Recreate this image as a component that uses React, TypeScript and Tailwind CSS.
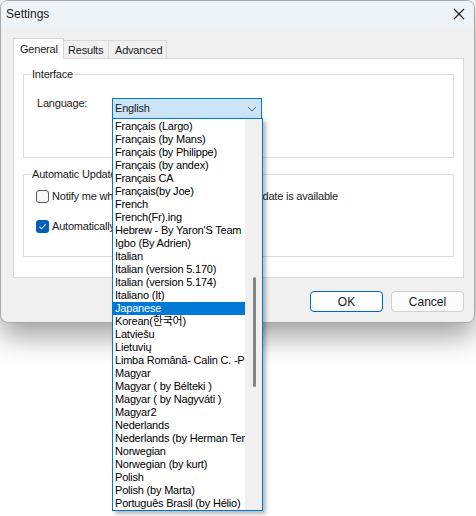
import React from "react";

const languages = [
  "Français (Largo)",
  "Français (by Mans)",
  "Français (by Philippe)",
  "Français (by andex)",
  "Français CA",
  "Français(by Joe)",
  "French",
  "French(Fr).ing",
  "Hebrew - By Yaron'S Team",
  "Igbo (By Adrien)",
  "Italian",
  "Italian (version 5.170)",
  "Italian (version 5.174)",
  "Italiano (It)",
  "Japanese",
  "Korean(한국어)",
  "Latviešu",
  "Lietuvių",
  "Limba Română- Calin C. -Piatra Neamt",
  "Magyar",
  "Magyar ( by Bélteki )",
  "Magyar ( by Nagyváti )",
  "Magyar2",
  "Nederlands",
  "Nederlands (by Herman Termaat)",
  "Norwegian",
  "Norwegian (by kurt)",
  "Polish",
  "Polish (by Marta)",
  "Português Brasil (by Hélio)",
];

const font =
  "font-['Liberation_Sans','Noto_Sans_CJK_KR',Arial,sans-serif] text-[11px] tracking-[-0.2px]";

function Checkbox({ checked }: { checked?: boolean }) {
  if (checked) {
    return (
      <span className="w-[13px] h-[13px] rounded-[3px] bg-[#005fb8] flex items-center justify-center shrink-0">
        <svg width="9" height="9" viewBox="0 0 9 9">
          <path d="M1.5 4.8 L3.6 6.8 L7.6 2.3" fill="none" stroke="#ffffff" strokeWidth="1.1" />
        </svg>
      </span>
    );
  }
  return <span className="w-[13px] h-[13px] rounded-[3px] border border-[#5d5d5d] bg-[#f6f6f6] shrink-0" />;
}

export default function App() {
  return (
    <div className={`relative w-[476px] h-[516px] bg-white overflow-hidden text-[#1a1a1a] ${font}`}>
      {/* Window */}
      <div className="w-[475px] h-[323px] rounded-[8px] border border-[#a9a9a9] bg-[#f0f0f0] shadow-[0_12px_30px_rgba(0,0,0,0.4)] flex flex-col">
        {/* Title bar */}
        <div className="h-[26px] bg-[#eef3f8] rounded-t-[7px] flex items-center justify-between pl-[5px] pr-[9px] shrink-0">
          <span className="text-[12px] tracking-normal">Settings</span>
          <svg width="12" height="12" viewBox="0 0 12 12">
            <path d="M1 1 L11 11 M11 1 L1 11" stroke="#1a1a1a" strokeWidth="1.1" />
          </svg>
        </div>

        {/* Body */}
        <div className="flex-1 pl-[12px] pr-[10px] pt-[10px] flex flex-col rounded-b-[7px]">
          {/* Tabs */}
          <div className="flex items-end h-[21px]">
            <div className="h-[21px] w-[51px] bg-white border border-b-0 border-[#d9d9d9] flex items-center pl-[6px] relative z-10 mb-[-1px]">
              General
            </div>
            <div className="h-[18px] w-[45px] bg-[#f0f0f0] border border-l-0 border-b-0 border-[#d9d9d9] flex items-center pl-[4px] pt-[1px]">
              Results
            </div>
            <div className="h-[18px] w-[58px] bg-[#f0f0f0] border border-l-0 border-b-0 border-[#d9d9d9] flex items-center pl-[6px] pt-[1px]">
              Advanced
            </div>
          </div>

          {/* Tab panel */}
          <div className="h-[220px] bg-white border border-[#d9d9d9] px-[9px] pt-[8px]">
            <fieldset className="h-[91px] border border-[#dcdcdc] p-0">
              <legend className="ml-[7px] px-[1px] leading-[14px]">Interface</legend>
              <div className="flex items-start mt-[17px] pl-[13px]">
                <span className="w-[75px] leading-[13px] mt-[-1px]">Language:</span>
                <div className="relative w-[150px] h-[21px] border border-[#0078d7] bg-[#cce4f7] flex items-center justify-between pl-[2px] pr-[4px]">
                  <span>English</span>
                  <svg width="10" height="6" viewBox="0 0 10 6">
                    <path d="M1 1 L5 5 L9 1" fill="none" stroke="#5a5a5a" strokeWidth="1" />
                  </svg>

                  {/* Open dropdown list */}
                  <div className="absolute left-[-1px] top-[19px] w-[151px] h-[393px] border border-[#0078d7] bg-white z-20 flex shadow-[3px_3px_4px_rgba(0,0,0,0.28)]">
                    <div className="flex-1 overflow-hidden pt-[1px]">
                      {languages.map((lang) => (
                        <div
                          key={lang}
                          className={`h-[13px] leading-[13px] pl-[2px] whitespace-nowrap ${
                            lang === "Japanese" ? "bg-[#0078d7] text-white" : "text-black"
                          }`}
                        >
                          {lang}
                        </div>
                      ))}
                    </div>
                    <div className="w-[17px] bg-[#f0f0f0] flex justify-center pl-[1px]">
                      <div className="w-[3px] h-[110px] mt-[158px] rounded-full bg-[#858585]" />
                    </div>
                  </div>
                </div>
              </div>
            </fieldset>

            <fieldset className="h-[90px] mt-[9px] border border-[#dcdcdc] p-0">
              <legend className="ml-[7px] px-[1px] leading-[14px]">Automatic Updates</legend>
              <div className="flex items-center gap-[3px] mt-[9px] pl-[12px] h-[13px]">
                <Checkbox />
                <span>Notify me when a new version or program update is available</span>
              </div>
              <div className="flex items-center gap-[3px] mt-[17px] pl-[12px] h-[13px]">
                <Checkbox checked />
                <span>Automatically check for updates</span>
              </div>
            </fieldset>
          </div>

          {/* Buttons */}
          <div className="flex justify-end gap-[8px] mt-[13px]">
            <button className="w-[73px] h-[21px] rounded-[4px] border border-[#0067c0] bg-[#fdfdfd] text-[12px] tracking-normal">
              OK
            </button>
            <button className="w-[73px] h-[21px] rounded-[4px] border border-[#d0d0d0] bg-[#fbfbfb] text-[12px] tracking-normal">
              Cancel
            </button>
          </div>
        </div>
      </div>
    </div>
  );
}
